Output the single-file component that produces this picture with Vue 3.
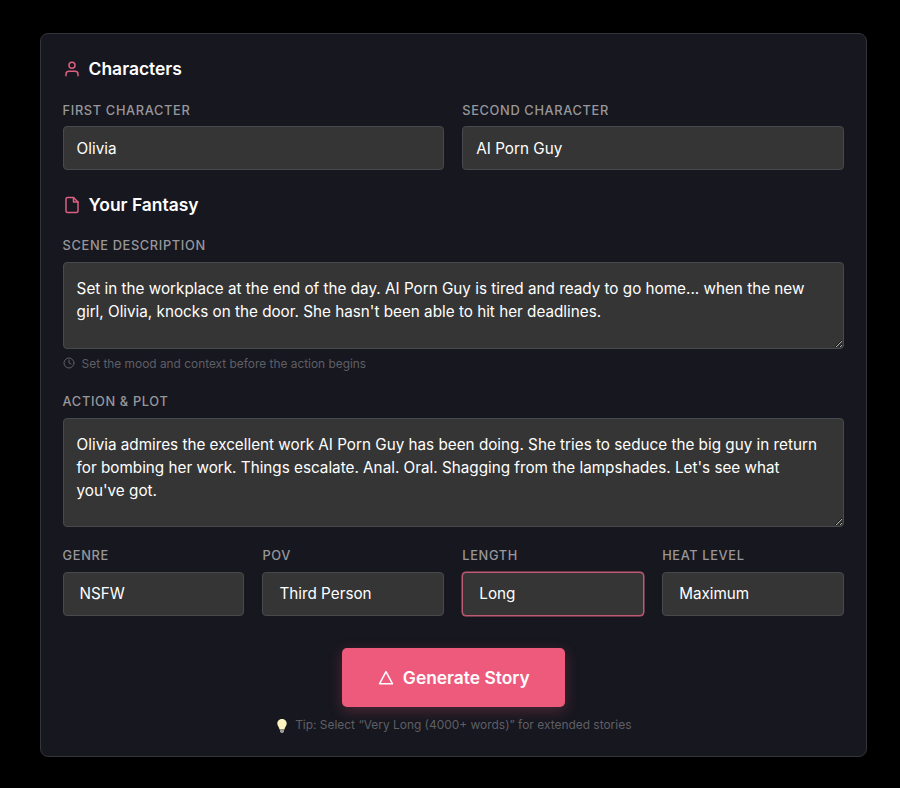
<template>
  <div class="page">
    <form class="card" @submit.prevent>
      <h2 class="section-title">
        <svg class="section-icon" viewBox="0 0 24 24" fill="none" stroke="currentColor" stroke-width="2" stroke-linecap="round" stroke-linejoin="round">
          <path d="M20 21v-2a4 4 0 0 0-4-4H8a4 4 0 0 0-4 4v2" />
          <circle cx="12" cy="7" r="4" />
        </svg>
        Characters
      </h2>
      <div class="row two">
        <label class="field">
          <span class="label">First Character</span>
          <input class="control" v-model="first" />
        </label>
        <label class="field">
          <span class="label">Second Character</span>
          <input class="control" v-model="second" />
        </label>
      </div>

      <h2 class="section-title fantasy">
        <svg class="section-icon" viewBox="0 0 24 24" fill="none" stroke="currentColor" stroke-width="2" stroke-linecap="round" stroke-linejoin="round">
          <path d="M14 2H6a2 2 0 0 0-2 2v16a2 2 0 0 0 2 2h12a2 2 0 0 0 2-2V8z" />
          <path d="M14 2v6h6" />
        </svg>
        Your Fantasy
      </h2>
      <label class="field">
        <span class="label">Scene Description</span>
        <textarea class="control area scene" v-model="scene"></textarea>
      </label>
      <p class="hint">
        <svg viewBox="0 0 24 24" fill="none" stroke="currentColor" stroke-width="2" stroke-linecap="round" stroke-linejoin="round">
          <circle cx="12" cy="12" r="10" />
          <path d="M12 6v6l4 2" />
        </svg>
        Set the mood and context before the action begins
      </p>
      <label class="field plot">
        <span class="label">Action &amp; Plot</span>
        <textarea class="control area action" v-model="action"></textarea>
      </label>

      <div class="row four">
        <label v-for="opt in options" :key="opt.label" class="field">
          <span class="label">{{ opt.label }}</span>
          <input class="control pick" :class="{ focused: opt.focused }" :value="opt.value" readonly />
        </label>
      </div>

      <div class="actions">
        <button class="generate" type="submit">
          <svg viewBox="0 0 24 24" fill="none" stroke="currentColor" stroke-width="2" stroke-linecap="round" stroke-linejoin="round">
            <path d="M12 3.4 20.7 19.7H3.3z" />
          </svg>
          Generate Story
        </button>
        <p class="tip">
          <svg class="bulb" viewBox="0 0 14 15">
            <path d="M7 1C4.4 1 2.3 3 2.3 5.5c0 2.2 1.7 3.4 2.3 6h4.8c.6-2.6 2.3-3.8 2.3-6C11.7 3 9.6 1 7 1z" fill="#fdf3c0" />
            <path d="M5 11.8h4v2L7.8 15H6.2L5 13.800z" fill="#9a9a96" />
          </svg>
          Tip: Select “Very Long (4000+ words)” for extended stories
        </p>
      </div>
    </form>
  </div>
</template>

<script setup>
import { ref } from 'vue'

const first = ref('Olivia')
const second = ref('AI Porn Guy')
const scene = ref("Set in the workplace at the end of the day. AI Porn Guy is tired and ready to go home... when the new girl, Olivia, knocks on the door. She hasn't been able to hit her deadlines.")
const action = ref("Olivia admires the excellent work AI Porn Guy has been doing. She tries to seduce the big guy in return for bombing her work. Things escalate. Anal. Oral. Shagging from the lampshades. Let's see what you've got.")

const options = [
  { label: 'Genre', value: 'NSFW' },
  { label: 'POV', value: 'Third Person' },
  { label: 'Length', value: 'Long', focused: true },
  { label: 'Heat Level', value: 'Maximum' }
]
</script>

<style>
html,
body {
  background: #000;
}
</style>

<style scoped>
.page {
  width: 900px;
  height: 788px;
  box-sizing: border-box;
  padding: 33px 33px 31px 40px;
  background: #000;
  font-family: Inter, "Liberation Sans", sans-serif;
  overflow: hidden;
}

.card {
  box-sizing: border-box;
  height: 724px;
  padding: 21px 22px 0 21.6px;
  background: #17171f;
  border: 1px solid #33343a;
  border-radius: 8px;
}

.section-title {
  display: flex;
  align-items: center;
  gap: 8px;
  height: 28px;
  margin: 0 0 18.5px;
  color: #fff;
  font-size: 17.45px;
  font-weight: 600;
  line-height: 28px;
}

.section-title.fantasy {
  margin-top: 21px;
  margin-bottom: 18px;
}

.section-icon {
  width: 18px;
  height: 18px;
  color: #dc5f80;
}

.row {
  display: grid;
  gap: 18px;
}

.row.two {
  grid-template-columns: 1fr 1fr;
}

.row.four {
  grid-template-columns: repeat(4, 1fr);
  margin-top: 20.5px;
}

.field {
  display: block;
}

.field.plot {
  margin-top: 21.5px;
}

.label {
  display: block;
  margin-bottom: 6.5px;
  color: #97979b;
  font-size: 12.8px;
  font-weight: 500;
  line-height: 18px;
  letter-spacing: 0.65px;
  text-transform: uppercase;
}

.control {
  display: block;
  box-sizing: border-box;
  width: 100%;
  height: 44px;
  padding: 0 13px;
  background: #353535;
  border: 1px solid #48494d;
  border-radius: 4px;
  color: #fff;
  font-family: inherit;
  font-size: 15.25px;
  line-height: 23px;
  outline: none;
}

.area {
  padding: 14px 16px 13px 13px;
  resize: vertical;
}

.scene {
  height: 87px;
}

.action {
  height: 109px;
}

.pick {
  padding-left: 16px;
}

.focused {
  border-color: #bf5a75;
  box-shadow: 0 0 0 0.5px #bf5a75;
}

.hint {
  display: flex;
  align-items: center;
  gap: 7px;
  margin: 7px 0 0;
  color: #5e5f65;
  font-size: 11.9px;
  line-height: 16px;
}

.hint svg {
  width: 12px;
  height: 12px;
  margin-top: -2px;
}

.actions {
  display: flex;
  flex-direction: column;
  align-items: center;
  margin-top: 32.5px;
}

.generate {
  display: flex;
  align-items: center;
  justify-content: center;
  gap: 8px;
  width: 223px;
  height: 59px;
  background: #ee5a7b;
  border: 0;
  border-radius: 5px;
  box-shadow: 0 4px 14px rgba(239, 90, 124, 0.25);
  color: #fff;
  font-family: inherit;
  font-size: 17.4px;
  font-weight: 600;
}

.generate svg {
  width: 18px;
  height: 18px;
}

.tip {
  display: flex;
  align-items: center;
  gap: 6px;
  margin: 10px 0 0;
  color: #5e5f65;
  font-size: 11.95px;
  line-height: 16px;
}

.bulb {
  width: 14px;
  height: 15px;
}
</style>
